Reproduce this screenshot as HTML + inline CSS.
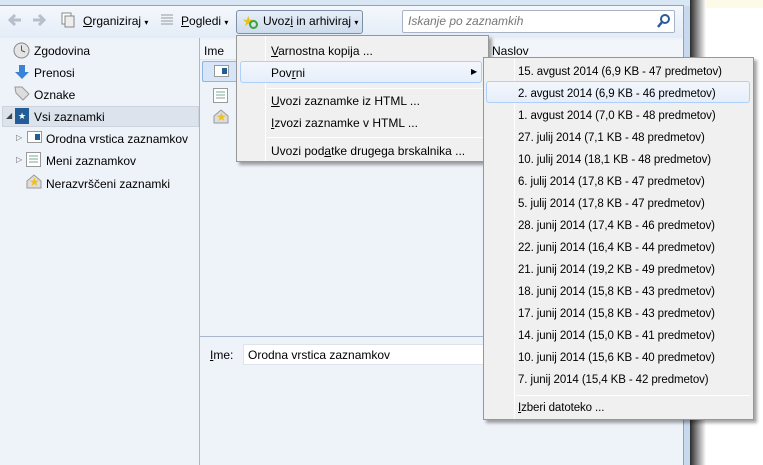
<!DOCTYPE html>
<html><head><style>
*{margin:0;padding:0;box-sizing:border-box}
body{width:763px;height:465px;position:relative;overflow:hidden;background:#fff;font-family:"Liberation Sans",sans-serif;font-size:12px;color:#000}
.a{position:absolute}
u{text-decoration:underline}
.mi{position:absolute;left:0;white-space:nowrap}
</style></head><body>
<div class="a" style="left:700px;top:0;width:63px;height:8px;background:#fdfbe8"></div>
<div class="a" style="left:690px;top:0;width:16px;height:465px;background:linear-gradient(90deg,#2a2a2a,#555 20%,#aaa 60%,#fff)"></div>
<div class="a" style="left:0;top:0;width:690px;height:465px;background:#c7d9ee"></div>
<div class="a" style="left:0;top:0;width:690px;height:6px;background:#d9e7f5"></div>
<div class="a" style="left:0;top:5px;width:684px;height:33px;background:linear-gradient(#f4f8fc,#e3ecf7);border-top:1px solid #8da4c0"></div>
<div class="a" style="left:0;top:38px;width:683px;height:427px;background:#eef2f9"></div>
<div class="a" style="left:683px;top:5px;width:1px;height:460px;background:#8da4c0"></div>
<div class="a" style="left:199px;top:38px;width:1px;height:427px;background:#a9b8cc"></div>
<div class="a" style="left:200px;top:336px;width:483px;height:1px;background:#a9b8cc"></div>
<!-- toolbar -->
<svg class="a" style="left:8px;top:14px" width="14" height="12"><path d="M7 1L2 6l5 5M2 6h11" fill="none" stroke="#b6bfca" stroke-width="3"/></svg>
<svg class="a" style="left:32px;top:14px" width="14" height="12"><path d="M7 1l5 5-5 5M12 6H1" fill="none" stroke="#b6bfca" stroke-width="3"/></svg>
<svg class="a" style="left:61px;top:12px" width="16" height="16"><rect x="1" y="1" width="9" height="11" fill="#fff" stroke="#888"/><rect x="4" y="4" width="9" height="11" fill="#eee" stroke="#888"/></svg>
<div class="a" style="left:83px;top:14px"><u>O</u>rganiziraj <span style="font-size:8px">▾</span></div>
<svg class="a" style="left:160px;top:13px" width="14" height="14"><g stroke="#999"><line x1="1" y1="2" x2="13" y2="2"/><line x1="1" y1="5" x2="13" y2="5"/><line x1="1" y1="8" x2="13" y2="8"/><line x1="1" y1="11" x2="13" y2="11"/></g></svg>
<div class="a" style="left:181px;top:14px"><u>P</u>ogledi <span style="font-size:8px">▾</span></div>
<div class="a" style="left:236px;top:10px;width:127px;height:24px;border:1px solid #7d8ea5;border-radius:3px;background:linear-gradient(#e6eef8,#cfdcec)"></div>
<div class="a" style="left:242px;top:13px;color:#e8c020;font-size:14px">★</div>
<div class="a" style="left:249px;top:20px;width:9px;height:9px;border-radius:50%;border:2px solid #3aa53a"></div>
<div class="a" style="left:263px;top:14px">Uvoz<u>i</u> in arhiviraj <span style="font-size:8px">▾</span></div>
<div class="a" style="left:402px;top:10px;width:273px;height:23px;background:#fff;border:1px solid #a8b4c4;border-radius:2px"></div>
<div class="a" style="left:408px;top:14px;color:#777;font-style:italic">Iskanje po zaznamkih</div>
<svg class="a" style="left:657px;top:13px" width="14" height="15"><circle cx="8" cy="6" r="4" fill="none" stroke="#2a5c9a" stroke-width="2"/><line x1="5" y1="9" x2="1" y2="14" stroke="#2a5c9a" stroke-width="2.5"/></svg>
<!-- left pane -->
<svg class="a" style="left:13px;top:42px" width="17" height="17"><circle cx="8.5" cy="8.5" r="7.5" fill="#e4e4e4" stroke="#888"/><line x1="8.5" y1="8.5" x2="8.5" y2="3.5" stroke="#555"/><line x1="8.5" y1="8.5" x2="12" y2="10" stroke="#555"/></svg>
<div class="a" style="left:34px;top:44px">Zgodovina</div>
<svg class="a" style="left:14px;top:64px" width="16" height="16"><path d="M5 1h6v7h4l-7 7-7-7h4z" fill="#3a84d6"/></svg>
<div class="a" style="left:34px;top:66px">Prenosi</div>
<svg class="a" style="left:14px;top:86px" width="16" height="16"><path d="M1 1h7l7 7-6 6-7-7z" fill="#ddd" stroke="#999"/></svg>
<div class="a" style="left:34px;top:88px">Oznake</div>
<div class="a" style="left:2px;top:106px;width:197px;height:21px;background:#dde3ec;border:1px solid #cdd4de"></div>
<div class="a" style="left:6px;top:111px;font-size:8px;color:#444">◢</div>
<div class="a" style="left:15px;top:108px;width:14px;height:16px;background:#235d98;color:#fff;font-size:9px;text-align:center;line-height:16px">★</div>
<div class="a" style="left:34px;top:110px">Vsi zaznamki</div>
<div class="a" style="left:16px;top:133px;font-size:8px;color:#666">▷</div>
<div class="a" style="left:27px;top:131px;width:15px;height:12px;border:1px solid #999;background:#fff"><div style="margin:2px 0 0 7px;width:5px;height:6px;background:#235d98"></div></div>
<div class="a" style="left:46px;top:132px">Orodna vrstica zaznamkov</div>
<div class="a" style="left:16px;top:155px;font-size:8px;color:#666">▷</div>
<svg class="a" style="left:26px;top:152px" width="15" height="15"><rect x="0.5" y="0.5" width="14" height="14" fill="#fff" stroke="#999"/><g stroke="#7a9"><line x1="3" y1="4" x2="12" y2="4"/><line x1="3" y1="7" x2="12" y2="7"/><line x1="3" y1="10" x2="12" y2="10"/></g></svg>
<div class="a" style="left:46px;top:154px">Meni zaznamkov</div>
<svg class="a" style="left:26px;top:173px" width="16" height="16"><path d="M1 8l7-6 7 6v7H1z" fill="#ddd" stroke="#999"/><text x="3" y="13" font-size="12" fill="#f0c020">★</text></svg>
<div class="a" style="left:46px;top:177px">Nerazvrščeni zaznamki</div>
<!-- right list -->
<div class="a" style="left:200px;top:40px;width:483px;height:20px;background:#f2f5fa;border-bottom:1px solid #e0e6ee"></div>
<div class="a" style="left:204px;top:44px">Ime</div>
<div class="a" style="left:492px;top:44px">Naslov</div>
<div class="a" style="left:202px;top:61px;width:40px;height:21px;background:#d6e5f7;border:1px solid #8fb4e0;border-radius:2px"></div>
<div class="a" style="left:214px;top:65px;width:15px;height:12px;border:1px solid #999;background:#fff"><div style="margin:2px 0 0 7px;width:5px;height:6px;background:#235d98"></div></div>
<svg class="a" style="left:213px;top:88px" width="15" height="15"><rect x="0.5" y="0.5" width="14" height="14" fill="#fff" stroke="#999"/><g stroke="#7a9"><line x1="3" y1="4" x2="12" y2="4"/><line x1="3" y1="7" x2="12" y2="7"/><line x1="3" y1="10" x2="12" y2="10"/></g></svg>
<svg class="a" style="left:213px;top:108px" width="16" height="16"><path d="M1 8l7-6 7 6v7H1z" fill="#ddd" stroke="#999"/><text x="3" y="13" font-size="12" fill="#f0c020">★</text></svg>
<!-- bottom -->
<div class="a" style="left:210px;top:348px"><u>I</u>me:</div>
<div class="a" style="left:243px;top:344px;width:250px;height:21px;background:#fff;border:1px solid #dde3ea"></div>
<div class="a" style="left:248px;top:348px">Orodna vrstica zaznamkov</div>
<!-- menu 1 -->
<div class="a" style="left:236px;top:35px;width:253px;height:127px;background:#f0f0f0;border:1px solid #979797;box-shadow:3px 3px 3px rgba(0,0,0,.35)">
 <div class="a" style="left:28px;top:0;width:1px;height:125px;background:#e2e3e3;border-right:1px solid #fff"></div>
 <div class="a" style="left:3px;top:25px;width:242px;height:22px;background:linear-gradient(#f3f7fc,#e6eefa);border:1px solid #aecff7;border-radius:3px"></div>
 <div class="mi" style="left:34px;top:8px"><u>V</u>arnostna kopija ...</div>
 <div class="mi" style="left:34px;top:30px">Pov<u>r</u>ni</div>
 <div class="mi" style="left:234px;top:31px;font-size:8px">▶</div>
 <div class="a" style="left:30px;top:52px;width:219px;height:1px;background:#e0e0e0;border-bottom:1px solid #fff"></div>
 <div class="mi" style="left:34px;top:58px"><u>U</u>vozi zaznamke iz HTML ...</div>
 <div class="mi" style="left:34px;top:80px"><u>I</u>zvozi zaznamke v HTML ...</div>
 <div class="a" style="left:30px;top:101px;width:219px;height:1px;background:#e0e0e0;border-bottom:1px solid #fff"></div>
 <div class="mi" style="left:34px;top:108px">Uvozi pod<u>a</u>tke drugega brskalnika ...</div>
</div>
<!-- submenu -->
<div class="a" style="left:483px;top:57px;width:271px;height:363px;background:#f0f0f0;border:1px solid #979797;box-shadow:3px 3px 3px rgba(0,0,0,.35);font-size:11.5px;letter-spacing:-0.1px">
 <div class="a" style="left:30px;top:0;width:1px;height:361px;background:#e2e3e3;border-right:1px solid #fff"></div>
 <div class="a" style="left:2px;top:23px;width:264px;height:22px;background:linear-gradient(#f3f7fc,#e6eefa);border:1px solid #aecff7;border-radius:3px"></div>
 <div class="mi" style="left:34px;top:8px">15. avgust 2014 (6,9 KB - 47 predmetov)</div>
 <div class="mi" style="left:34px;top:30px">2. avgust 2014 (6,9 KB - 46 predmetov)</div>
 <div class="mi" style="left:34px;top:52px">1. avgust 2014 (7,0 KB - 48 predmetov)</div>
 <div class="mi" style="left:34px;top:74px">27. julij 2014 (7,1 KB - 48 predmetov)</div>
 <div class="mi" style="left:34px;top:96px">10. julij 2014 (18,1 KB - 48 predmetov)</div>
 <div class="mi" style="left:34px;top:118px">6. julij 2014 (17,8 KB - 47 predmetov)</div>
 <div class="mi" style="left:34px;top:140px">5. julij 2014 (17,8 KB - 47 predmetov)</div>
 <div class="mi" style="left:34px;top:162px">28. junij 2014 (17,4 KB - 46 predmetov)</div>
 <div class="mi" style="left:34px;top:184px">22. junij 2014 (16,4 KB - 44 predmetov)</div>
 <div class="mi" style="left:34px;top:206px">21. junij 2014 (19,2 KB - 49 predmetov)</div>
 <div class="mi" style="left:34px;top:228px">18. junij 2014 (15,8 KB - 43 predmetov)</div>
 <div class="mi" style="left:34px;top:250px">17. junij 2014 (15,8 KB - 43 predmetov)</div>
 <div class="mi" style="left:34px;top:272px">14. junij 2014 (15,0 KB - 41 predmetov)</div>
 <div class="mi" style="left:34px;top:294px">10. junij 2014 (15,6 KB - 40 predmetov)</div>
 <div class="mi" style="left:34px;top:316px">7. junij 2014 (15,4 KB - 42 predmetov)</div>
 <div class="a" style="left:32px;top:337px;width:234px;height:1px;background:#e0e0e0;border-bottom:1px solid #fff"></div>
 <div class="mi" style="left:34px;top:344px"><u>I</u>zberi datoteko ...</div>
</div>
</body></html>
